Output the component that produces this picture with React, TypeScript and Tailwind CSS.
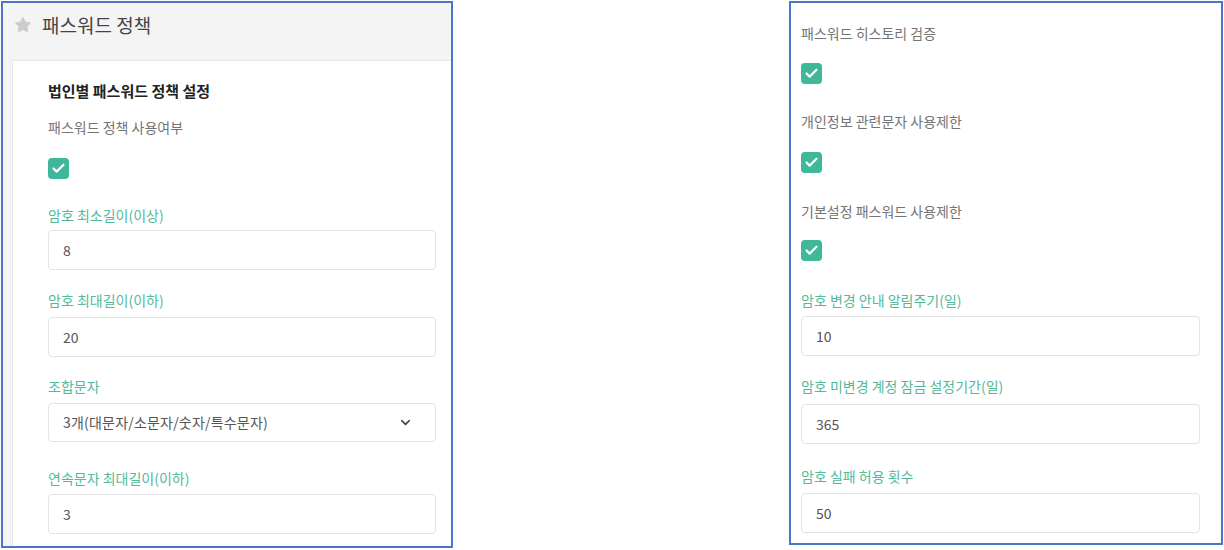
import { Check, ChevronDown, Star } from 'lucide-react';

const font = { fontFamily: '"Noto Sans CJK KR", "Noto Sans", sans-serif' };

function CheckBox({ className = '' }: { className?: string }) {
  return (
    <div className={`flex h-[21px] w-[21px] items-center justify-center rounded-[4px] bg-[#3fb79a] ${className}`}>
      <Check className="h-[15px] w-[15px] text-white" strokeWidth={3.5} />
    </div>
  );
}

function GrayLabel({ text, className = '' }: { text: string; className?: string }) {
  return <div className={`text-[14px] leading-[20px] text-[#747474] ${className}`}>{text}</div>;
}

function TealLabel({ text, className = '' }: { text: string; className?: string }) {
  return <div className={`text-[14px] leading-[20px] text-[#52b99a] ${className}`}>{text}</div>;
}

function TextBox({ value, className = '' }: { value: string; className?: string }) {
  return (
    <div className={`flex h-[40px] items-center rounded-[4px] border border-[#e3e3e3] bg-white px-[14px] text-[14px] text-[#555] ${className}`}>
      {value}
    </div>
  );
}

function SelectBox({ value, className = '' }: { value: string; className?: string }) {
  return (
    <div className={`flex h-[39px] items-center justify-between rounded-[4px] border border-[#e3e3e3] bg-white pl-[14px] pr-[22px] text-[14px] text-[#555] ${className}`}>
      <span className="tracking-[0.2px]">{value}</span>
      <ChevronDown className="h-[15px] w-[15px] text-[#444]" strokeWidth={2.5} />
    </div>
  );
}

export default function App() {
  return (
    <div className="flex h-[550px] w-[1224px] justify-between bg-white pl-[1px] pr-[1px] pt-[1px]" style={font}>
      {/* left panel */}
      <div className="flex h-[547px] w-[452px] flex-col overflow-hidden border-2 border-[#4a76c8] bg-[#f4f4f4]">
        <div className="h-[57px] pl-[11px] pt-[10px]">
          <div className="flex h-[24px] items-center gap-[10px]">
            <Star className="h-[18px] w-[18px] text-[#cccccc]" fill="#cccccc" strokeWidth={1} />
            <span className="text-[19px] leading-[24px] text-[#454545]">패스워드 정책</span>
          </div>
        </div>
        <div className="ml-[9px] flex-1 border-l border-t border-[#e6e6e6] bg-white pl-[35px] pr-[15px] pt-[20px]">
          <div className="text-[15px] font-bold leading-[20px] text-[#222]">법인별 패스워드 정책 설정</div>
          <GrayLabel text="패스워드 정책 사용여부" className="mt-[16px]" />
          <CheckBox className="mt-[21px]" />
          <TealLabel text="암호 최소길이(이상)" className="mt-[26px]" />
          <TextBox value="8" className="mt-[5px]" />
          <TealLabel text="암호 최대길이(이하)" className="mt-[20px]" />
          <TextBox value="20" className="mt-[7px]" />
          <TealLabel text="조합문자" className="mt-[19px]" />
          <SelectBox value="3개(대문자/소문자/숫자/특수문자)" className="mt-[7px]" />
          <TealLabel text="연속문자 최대길이(이하)" className="mt-[26px]" />
          <TextBox value="3" className="mt-[6px]" />
        </div>
      </div>

      {/* right panel */}
      <div className="h-[544px] w-[434px] border-2 border-[#4a76c8] bg-white pl-[10px] pr-[21px] pt-[20px]">
        <GrayLabel text="패스워드 히스토리 검증" />
        <CheckBox className="mt-[20px]" />
        <GrayLabel text="개인정보 관련문자 사용제한" className="mt-[27px]" />
        <CheckBox className="mt-[21px]" />
        <GrayLabel text="기본설정 패스워드 사용제한" className="mt-[28px]" />
        <CheckBox className="mt-[19px]" />
        <TealLabel text="암호 변경 안내 알림주기(일)" className="mt-[29px]" />
        <TextBox value="10" className="mt-[6px]" />
        <TealLabel text="암호 미변경 계정 잠금 설정기간(일)" className="mt-[20px]" />
        <TextBox value="365" className="mt-[8px]" />
        <TealLabel text="암호 실패 허용 횟수" className="mt-[22px]" />
        <TextBox value="50" className="mt-[7px]" />
      </div>
    </div>
  );
}
